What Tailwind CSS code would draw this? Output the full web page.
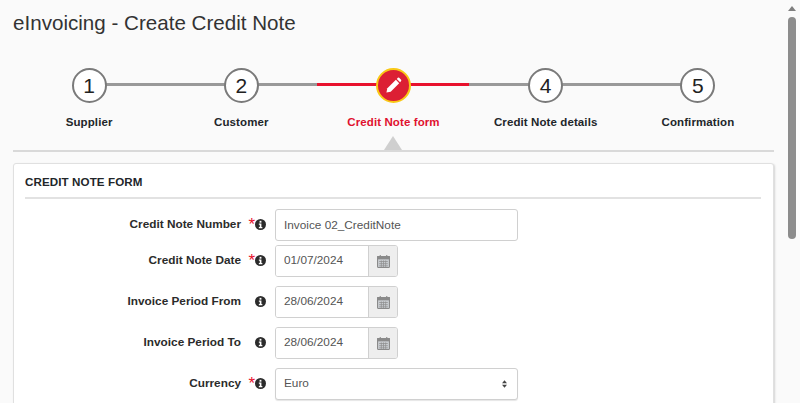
<!DOCTYPE html>
<html lang="en">
<head>
  <meta charset="UTF-8" />
  <meta name="viewport" content="width=device-width, initial-scale=1.0" />
  <title>eInvoicing - Create Credit Note</title>
  <script src="https://cdn.jsdelivr.net/npm/@tailwindcss/browser@4"></script>
</head>
<body class="h-[403px] overflow-hidden bg-[#fafafa] text-[#212529] font-['Liberation_Sans',Arial,sans-serif]">
  <div class="flex h-[403px]">
    <main class="w-[786px] shrink-0 pl-[13px] pr-[12px] overflow-hidden">
      <h1 class="pt-[10px] h-[68px] text-[20.6px] leading-[26px] text-[#333]">eInvoicing - Create Credit Note</h1>

      <!-- wizard steps -->
      <div class="relative grid grid-cols-5 h-[84px] border-b-2 border-[#d9d9d9]">
        <div class="absolute left-[76px] w-[228px] top-[15px] h-[3px] bg-[#999999]"></div>
        <div class="absolute left-[304px] w-[152px] top-[15px] h-[3px] bg-[#e8112d]"></div>
        <div class="absolute left-[456px] w-[228px] top-[15px] h-[3px] bg-[#999999]"></div>

        <div class="relative flex flex-col items-center">
          <div class="w-[35px] h-[35px] rounded-full border-2 border-[#7a7a7a] bg-white flex items-center justify-center text-[21px] text-[#222]">1</div>
          <span class="mt-[12px] text-[11.5px] leading-[14px] font-bold tracking-[0.1px] text-[#22262a]">Supplier</span>
        </div>
        <div class="relative flex flex-col items-center">
          <div class="w-[35px] h-[35px] rounded-full border-2 border-[#7a7a7a] bg-white flex items-center justify-center text-[21px] text-[#222]">2</div>
          <span class="mt-[12px] text-[11.5px] leading-[14px] font-bold tracking-[0.1px] text-[#22262a]">Customer</span>
        </div>
        <div class="relative flex flex-col items-center">
          <div class="w-[35px] h-[35px] rounded-full border-2 border-[#f9c816] bg-[#dc1f34] flex items-center justify-center">
            <svg class="w-[17px] h-[17px]" viewBox="0 0 18 18" fill="#fff">
              <path d="M1.500 16.500 L2.500 12 L11.500 3 L15 6.500 L6 15.500 Z" />
              <path d="M12.500 2 L13.600 0.900 Q14.300 0.300 15 0.900 L17 2.900 Q17.600 3.600 17 4.300 L16 5.500 Z" />
            </svg>
          </div>
          <span class="mt-[12px] text-[11.5px] leading-[14px] font-bold tracking-[0.1px] text-[#e0112f]">Credit Note form</span>
          <div class="absolute bottom-0 w-0 h-0 border-l-[9px] border-r-[9px] border-b-[14px] border-l-transparent border-r-transparent border-b-[#cfcfcf]"></div>
        </div>
        <div class="relative flex flex-col items-center">
          <div class="w-[35px] h-[35px] rounded-full border-2 border-[#7a7a7a] bg-white flex items-center justify-center text-[21px] text-[#222]">4</div>
          <span class="mt-[12px] text-[11.5px] leading-[14px] font-bold tracking-[0.1px] text-[#22262a]">Credit Note details</span>
        </div>
        <div class="relative flex flex-col items-center">
          <div class="w-[35px] h-[35px] rounded-full border-2 border-[#7a7a7a] bg-white flex items-center justify-center text-[21px] text-[#222]">5</div>
          <span class="mt-[12px] text-[11.5px] leading-[14px] font-bold tracking-[0.1px] text-[#22262a]">Confirmation</span>
        </div>
      </div>

      <!-- form card -->
      <section class="mt-[11px] h-[300px] bg-white rounded-[3px] border border-[#e0e0e0] shadow-[1px_1px_2px_rgba(0,0,0,0.15)] pl-[11px] pr-[12px]">
        <h2 class="pt-[11px] h-[35px] text-[11.6px] leading-[13px] font-bold text-[#22262a] border-b-2 border-[#e2e2e2] tracking-[0.1px]">CREDIT NOTE FORM</h2>

        <div class="pt-[10px] flex flex-col">
          <div class="flex items-start h-[36px]">
            <label class="w-[216px] pt-[8px] text-right text-[11.8px] leading-[14px] font-bold text-[#2b2b2b]">Credit Note Number</label>
            <div class="w-[34px] pt-[6px] flex justify-end pr-[9px]">
              <span class="mt-[3px] text-[17px] leading-[14px] text-[#e8112d]">*</span>
              <svg class="w-[11px] h-[11px] mt-[4px]" viewBox="0 0 12 12"><circle cx="6" cy="6" r="6" fill="#2b2b2b"/><rect x="5" y="2" width="2" height="2" fill="#fff"/><path d="M4.200 5h2.800v3.600h1V10H4.200V8.600h1V6.200h-1z" fill="#fff"/></svg>
            </div>
            <input value="Invoice 02_CreditNote" class="w-[243px] h-[32px] px-[8px] border border-[#d0d0d0] rounded-[3px] bg-white text-[11.8px] text-[#555]" />
          </div>

          <div class="flex items-start h-[41px]">
            <label class="w-[216px] pt-[8px] text-right text-[11.8px] leading-[14px] font-bold text-[#2b2b2b]">Credit Note Date</label>
            <div class="w-[34px] pt-[6px] flex justify-end pr-[9px]">
              <span class="mt-[3px] text-[17px] leading-[14px] text-[#e8112d]">*</span>
              <svg class="w-[11px] h-[11px] mt-[4px]" viewBox="0 0 12 12"><circle cx="6" cy="6" r="6" fill="#2b2b2b"/><rect x="5" y="2" width="2" height="2" fill="#fff"/><path d="M4.200 5h2.800v3.600h1V10H4.200V8.600h1V6.200h-1z" fill="#fff"/></svg>
            </div>
            <div class="flex w-[123px] h-[32px] border border-[#d0d0d0] rounded-[3px] overflow-hidden">
              <input value="01/07/2024" class="w-[92px] px-[8px] bg-white text-[11.8px] text-[#555]" />
              <div class="flex-1 bg-[#eeeeee] border-l border-[#d0d0d0] flex items-center justify-center">
                <svg class="w-[13px] h-[13px]" viewBox="0 0 12 12"><rect x="0.500" y="1.500" width="11" height="10" rx="1" fill="#c9cdd1" stroke="#8a8a8a"/><rect x="0" y="1" width="12" height="3" fill="#8a8a8a"/><rect x="2.500" y="0" width="1" height="2" fill="#8a8a8a"/><rect x="8.500" y="0" width="1" height="2" fill="#8a8a8a"/><path d="M2 6h8M2 8h8M2 10h8M4 5v6M6 5v6M8 5v6" stroke="#8f8f8f" stroke-width="0.700"/></svg>
              </div>
            </div>
          </div>

          <div class="flex items-start h-[41px]">
            <label class="w-[216px] pt-[8px] text-right text-[11.8px] leading-[14px] font-bold text-[#2b2b2b]">Invoice Period From</label>
            <div class="w-[34px] pt-[6px] flex justify-end pr-[9px]">
              <svg class="w-[11px] h-[11px] mt-[4px]" viewBox="0 0 12 12"><circle cx="6" cy="6" r="6" fill="#2b2b2b"/><rect x="5" y="2" width="2" height="2" fill="#fff"/><path d="M4.200 5h2.800v3.600h1V10H4.200V8.600h1V6.200h-1z" fill="#fff"/></svg>
            </div>
            <div class="flex w-[123px] h-[32px] border border-[#d0d0d0] rounded-[3px] overflow-hidden">
              <input value="28/06/2024" class="w-[92px] px-[8px] bg-white text-[11.8px] text-[#555]" />
              <div class="flex-1 bg-[#eeeeee] border-l border-[#d0d0d0] flex items-center justify-center">
                <svg class="w-[13px] h-[13px]" viewBox="0 0 12 12"><rect x="0.500" y="1.500" width="11" height="10" rx="1" fill="#c9cdd1" stroke="#8a8a8a"/><rect x="0" y="1" width="12" height="3" fill="#8a8a8a"/><rect x="2.500" y="0" width="1" height="2" fill="#8a8a8a"/><rect x="8.500" y="0" width="1" height="2" fill="#8a8a8a"/><path d="M2 6h8M2 8h8M2 10h8M4 5v6M6 5v6M8 5v6" stroke="#8f8f8f" stroke-width="0.700"/></svg>
              </div>
            </div>
          </div>

          <div class="flex items-start h-[41px]">
            <label class="w-[216px] pt-[8px] text-right text-[11.8px] leading-[14px] font-bold text-[#2b2b2b]">Invoice Period To</label>
            <div class="w-[34px] pt-[6px] flex justify-end pr-[9px]">
              <svg class="w-[11px] h-[11px] mt-[4px]" viewBox="0 0 12 12"><circle cx="6" cy="6" r="6" fill="#2b2b2b"/><rect x="5" y="2" width="2" height="2" fill="#fff"/><path d="M4.200 5h2.800v3.600h1V10H4.200V8.600h1V6.200h-1z" fill="#fff"/></svg>
            </div>
            <div class="flex w-[123px] h-[32px] border border-[#d0d0d0] rounded-[3px] overflow-hidden">
              <input value="28/06/2024" class="w-[92px] px-[8px] bg-white text-[11.8px] text-[#555]" />
              <div class="flex-1 bg-[#eeeeee] border-l border-[#d0d0d0] flex items-center justify-center">
                <svg class="w-[13px] h-[13px]" viewBox="0 0 12 12"><rect x="0.500" y="1.500" width="11" height="10" rx="1" fill="#c9cdd1" stroke="#8a8a8a"/><rect x="0" y="1" width="12" height="3" fill="#8a8a8a"/><rect x="2.500" y="0" width="1" height="2" fill="#8a8a8a"/><rect x="8.500" y="0" width="1" height="2" fill="#8a8a8a"/><path d="M2 6h8M2 8h8M2 10h8M4 5v6M6 5v6M8 5v6" stroke="#8f8f8f" stroke-width="0.700"/></svg>
              </div>
            </div>
          </div>

          <div class="flex items-start h-[41px]">
            <label class="w-[216px] pt-[8px] text-right text-[11.8px] leading-[14px] font-bold text-[#2b2b2b]">Currency</label>
            <div class="w-[34px] pt-[6px] flex justify-end pr-[9px]">
              <span class="mt-[3px] text-[17px] leading-[14px] text-[#e8112d]">*</span>
              <svg class="w-[11px] h-[11px] mt-[4px]" viewBox="0 0 12 12"><circle cx="6" cy="6" r="6" fill="#2b2b2b"/><rect x="5" y="2" width="2" height="2" fill="#fff"/><path d="M4.200 5h2.800v3.600h1V10H4.200V8.600h1V6.200h-1z" fill="#fff"/></svg>
            </div>
            <div class="w-[243px] h-[32px] px-[8px] border border-[#d0d0d0] rounded-[3px] bg-white shadow-[0_1px_1px_rgba(0,0,0,0.1)] flex items-center justify-between text-[11.8px] text-[#555]">
              <span>Euro</span>
              <svg class="w-[5px] h-[8px] mr-[2px]" viewBox="0 0 6 9" fill="#444"><path d="M3 0l3 3.500H0zM3 9L0 5.500h6z"/></svg>
            </div>
          </div>
        </div>
      </section>
    </main>

    <!-- scrollbar -->
    <aside class="flex-1 flex flex-col items-center pt-[6px] pr-[2px]">
      <div class="w-0 h-0 border-l-[4px] border-r-[4px] border-b-[5px] border-l-transparent border-r-transparent border-b-[#7f7f7f]"></div>
      <div class="mt-[6px] w-[8px] h-[222px] rounded-[4px] bg-[#8c8c8c]"></div>
    </aside>
  </div>
</body>
</html>
